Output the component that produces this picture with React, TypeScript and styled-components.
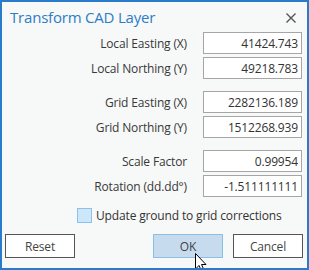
import React from "react"
import styled, { createGlobalStyle } from "styled-components"

const GlobalStyle = createGlobalStyle`
  html, body {
    margin: 0;
    padding: 0;
    background: #ffffff;
  }
  * {
    box-sizing: border-box;
  }
`

const Window = styled.div`
  position: relative;
  width: 309px;
  height: 270px;
  overflow: hidden;
  background: #f7f8f8;
  border: 2px solid #2b7bcc;
  font-family: "Open Sans", "Noto Sans", sans-serif;
  color: #333;
  display: flex;
  flex-direction: column;
`

const TitleBar = styled.div`
  height: 30px;
  display: flex;
  align-items: center;
  justify-content: space-between;
  padding: 0 10px 0 8px;
`

const Title = styled.div`
  font-size: 15px;
  color: #2d7dc6;
  letter-spacing: -0.2px;
`

const CloseButton = styled.button`
  border: none;
  background: none;
  padding: 0;
  display: flex;
  width: 12px;
  height: 12px;
  margin-top: 2px;
`

const Form = styled.div`
  display: flex;
  flex-direction: column;
  gap: 12px;
`

const Group = styled.div`
  display: grid;
  grid-template-columns: 185px 99px;
  column-gap: 16px;
  row-gap: 3px;
  align-items: center;
`

const Label = styled.label`
  font-size: 12px;
  text-align: right;
  color: #383838;
  white-space: nowrap;
  letter-spacing: -0.15px;
`

const Field = styled.input`
  height: 22px;
  width: 99px;
  border: 1px solid #a6a6a6;
  background: #ffffff;
  font-family: inherit;
  font-size: 12px;
  color: #333;
  text-align: right;
  padding: 0 3px 0 2px;
  outline: none;
  letter-spacing: -0.15px;
`

const CheckRow = styled.div`
  display: flex;
  align-items: center;
  gap: 4px;
  margin: 10px 0 0 75px;
  font-size: 12px;
  letter-spacing: -0.15px;
`

const Box = styled.span`
  width: 15px;
  height: 15px;
  border: 1px solid #8fc0e8;
  background: #cce6fa;
`

const ButtonRow = styled.div`
  display: flex;
  margin: 10px 4px 0 3px;
  gap: 10px;
`

const Button = styled.button<{ $primary?: boolean }>`
  width: 70px;
  height: 24px;
  font-family: inherit;
  font-size: 12px;
  letter-spacing: -0.15px;
  color: #444;
  background: ${(p) => (p.$primary ? "#c6dcee" : "#ffffff")};
  border: 1px solid ${(p) => (p.$primary ? "#8cbfe8" : "#555555")};
  padding: 0;
  &:first-child {
    margin-right: auto;
  }
`

const Cursor = styled.svg`
  position: absolute;
  left: 192px;
  top: 250px;
`

const rows = [
  [
    ["Local Easting (X)", "41424.743"],
    ["Local Northing (Y)", "49218.783"]
  ],
  [
    ["Grid Easting (X)", "2282136.189"],
    ["Grid Northing (Y)", "1512268.939"]
  ],
  [
    ["Scale Factor", "0.99954"],
    ["Rotation (dd.dd°)", "-1.511111111"]
  ]
]

const App = () => (
  <>
    <GlobalStyle />
    <Window>
      <TitleBar>
        <Title>Transform CAD Layer</Title>
        <CloseButton aria-label="Close">
          <svg width="12" height="12" viewBox="0 0 12 12">
            <path d="M1.5 1.5 L10.5 10.5 M10.5 1.5 L1.5 10.5" stroke="#555" strokeWidth="1.4" />
          </svg>
        </CloseButton>
      </TitleBar>

      <Form>
        {rows.map((group, g) => (
          <Group key={g}>
            {group.map(([label, value]) => (
              <React.Fragment key={label}>
                <Label>{label}</Label>
                <Field defaultValue={value} readOnly />
              </React.Fragment>
            ))}
          </Group>
        ))}
      </Form>

      <CheckRow>
        <Box />
        Update ground to grid corrections
      </CheckRow>

      <ButtonRow>
        <Button>Reset</Button>
        <Button $primary>OK</Button>
        <Button>Cancel</Button>
      </ButtonRow>

      <Cursor width="14" height="22" viewBox="0 0 14 22">
        <path
          d="M1.5 1.5 L1.5 17 L5 13.5 L8 20 L10.5 19 L7.5 12.5 L12 12.5 Z"
          fill="#ffffff"
          stroke="#000000"
          strokeWidth="1"
          strokeLinejoin="round"
        />
      </Cursor>
    </Window>
  </>
)

export default App
